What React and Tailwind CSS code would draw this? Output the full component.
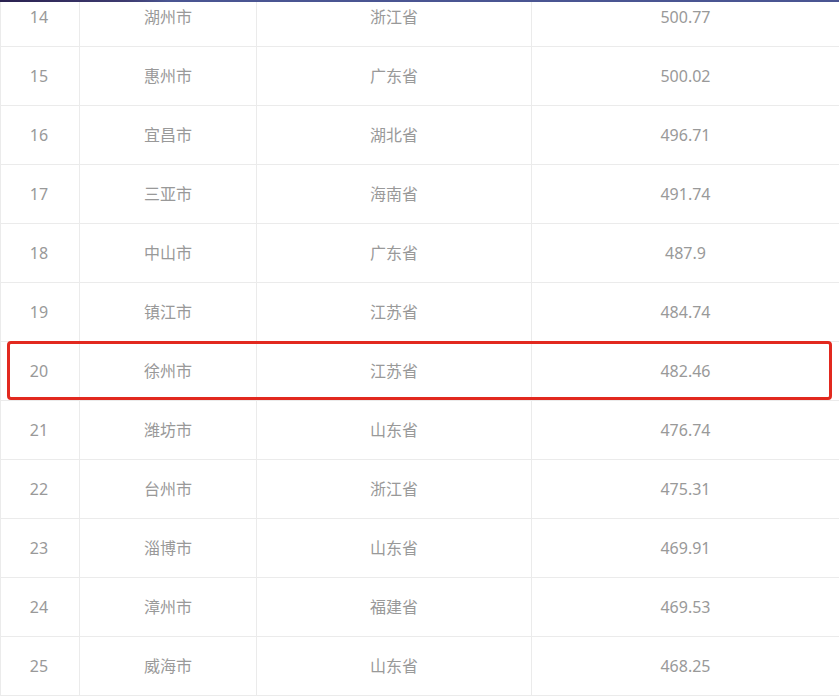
const rows = [
  ["14", "湖州市", "浙江省", "500.77"],
  ["15", "惠州市", "广东省", "500.02"],
  ["16", "宜昌市", "湖北省", "496.71"],
  ["17", "三亚市", "海南省", "491.74"],
  ["18", "中山市", "广东省", "487.9"],
  ["19", "镇江市", "江苏省", "484.74"],
  ["20", "徐州市", "江苏省", "482.46"],
  ["21", "潍坊市", "山东省", "476.74"],
  ["22", "台州市", "浙江省", "475.31"],
  ["23", "淄博市", "山东省", "469.91"],
  ["24", "漳州市", "福建省", "469.53"],
  ["25", "威海市", "山东省", "468.25"],
];

function Row({ cells, first, highlight }) {
  const pad = first ? "pb-[14px]" : "";
  return (
    <div
      className={`relative flex border-b border-[#ebebeb] ${
        first ? "h-[45px]" : "h-[59px]"
      }`}
    >
      <div className={`flex w-[80px] items-center justify-center border-x border-[#ebebeb] pr-[2px] ${pad}`}>
        {cells[0]}
      </div>
      <div className={`flex w-[177px] items-center justify-center border-r border-[#ebebeb] ${pad}`}>
        {cells[1]}
      </div>
      <div className={`flex w-[275px] items-center justify-center border-r border-[#ebebeb] ${pad}`}>
        {cells[2]}
      </div>
      <div className={`flex flex-1 items-center justify-center ${pad}`}>{cells[3]}</div>
      {highlight && (
        <div className="pointer-events-none absolute left-[7px] right-[7px] top-[-1px] bottom-0 rounded-[4px] border-[3px] border-[#e2291f]" />
      )}
    </div>
  );
}

export default function App() {
  return (
    <div
      className="h-[696px] w-[839px] overflow-hidden bg-white text-[16px] text-[#999]"
      style={{ fontFamily: '"Noto Sans", "Noto Sans CJK SC", sans-serif' }}
    >
      <div className="h-[2px] bg-gradient-to-r from-[#2a2150] via-[#3d3b70] via-15% to-[#4a5592] to-20%" />
      {rows.map((r, i) => (
        <Row key={r[0]} cells={r} first={i === 0} highlight={r[0] === "20"} />
      ))}
    </div>
  );
}
